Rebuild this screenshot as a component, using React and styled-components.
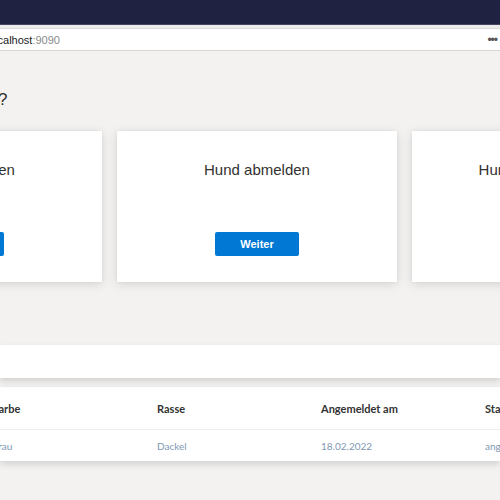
import React from 'react'
import styled, { createGlobalStyle } from 'styled-components'

const Global = createGlobalStyle`
  html, body {
    margin: 0;
    padding: 0;
    background: #f3f2f1;
    overflow: hidden;
  }
  body {
    width: 500px;
    height: 500px;
    font-family: "Segoe UI", "Liberation Sans", sans-serif;
  }
`

const Chrome = styled.div`
  height: 24px;
  background: #1f2241;
  border-bottom: 1px solid #44465f;
`

const AddressWrap = styled.div`
  background: #ececec;
  padding-top: 3px;
`

const Address = styled.div`
  height: 21px;
  background: #fff;
  border-top: 1px solid #dcdcdc;
  border-bottom: 1px solid #d6d6d6;
  display: flex;
  align-items: center;
  justify-content: space-between;
  font-size: 11px;
  color: #222;
  margin-left: -11px;
  span { color: #8a8a8a; }
`

const Dots = styled.div`
  font-size: 12px;
  letter-spacing: -1px;
  color: #555;
  margin-right: 3px;
`

const Main = styled.div`
  padding-top: 38px;
`

const Question = styled.h2`
  margin: 0 0 20px -163px;
  font-weight: 400;
  font-size: 17px;
  color: #323130;
  line-height: 22px;
  white-space: nowrap;
`

const CardRow = styled.div`
  display: flex;
  gap: 15px;
  margin-left: -178px;
`

const Card = styled.div`
  flex: 0 0 280px;
  height: 151px;
  background: #fff;
  box-shadow: 0 2px 10px rgba(0, 0, 0, 0.13), 0 0 2px rgba(0, 0, 0, 0.06);
  display: flex;
  flex-direction: column;
  align-items: center;
  padding-top: 28px;
  box-sizing: border-box;
`

const CardTitle = styled.div`
  font-size: 15px;
  color: #323130;
  line-height: 22px;
  height: 73px;
  white-space: nowrap;
`

const Button = styled.button`
  width: 84px;
  height: 24px;
  border: none;
  border-radius: 2px;
  background: #0078d4;
  color: #fff;
  font-family: "Segoe UI", "Liberation Sans", sans-serif;
  font-weight: 700;
  font-size: 11px;
`

const Bar = styled.div`
  margin-top: 63px;
  height: 33px;
  background: #fff;
  box-shadow: 0 3px 6px rgba(0, 0, 0, 0.14);
`

const TableCard = styled.div`
  margin-top: 9px;
  background: #fff;
  box-shadow: 0 3px 7px rgba(0, 0, 0, 0.14);
  font-family: Lato, "Liberation Sans", sans-serif;
`

const Row = styled.div`
  display: grid;
  grid-template-columns: repeat(5, 164px);
  margin-left: -171px;
  align-items: center;
  height: ${p => p.$h}px;
  border-top: ${p => (p.$line ? '1px solid #ececec' : 'none')};
`

const Head = styled.div`
  font-size: 11px;
  font-weight: 700;
  color: #333;
  white-space: nowrap;
`

const Cell = styled.div`
  font-size: 10px;
  color: #8197b3;
  white-space: nowrap;
`

const cols = ['Name', 'Farbe', 'Rasse', 'Angemeldet am', 'Status']
const data = ['Bello', 'grau', 'Dackel', '18.02.2022', 'angemeldet']

export default function App() {
  return (
    <>
      <Global />
      <Chrome />
      <AddressWrap>
        <Address>
          <div>localhost<span>:9090</span></div>
          <Dots>•••</Dots>
        </Address>
      </AddressWrap>
      <Main>
        <Question>Was möchten Sie tun?</Question>
        <CardRow>
          {['Hund anmelden', 'Hund abmelden', 'Hundedaten anzeigen'].map(t => (
            <Card key={t}>
              <CardTitle>{t}</CardTitle>
              <Button>Weiter</Button>
            </Card>
          ))}
        </CardRow>
        <Bar />
        <TableCard>
          <Row $h={42}>
            {cols.map(c => <Head key={c}>{c}</Head>)}
          </Row>
          <Row $h={31} $line>
            {data.map(d => <Cell key={d}>{d}</Cell>)}
          </Row>
        </TableCard>
      </Main>
    </>
  )
}
